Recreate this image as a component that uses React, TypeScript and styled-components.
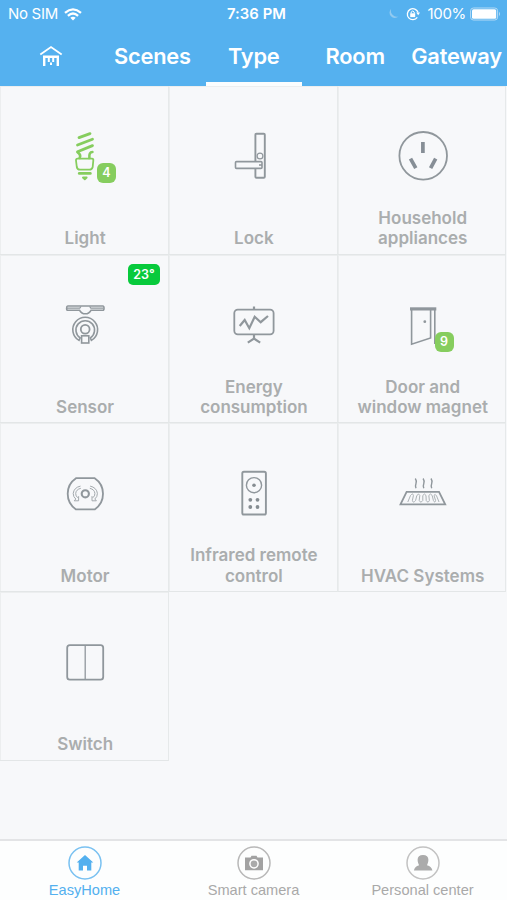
import React from "react";
import styled, { createGlobalStyle } from "styled-components";

const GlobalStyle = createGlobalStyle`
  *, *::before, *::after { box-sizing: border-box; }
  body { margin: 0; background: #f7f8fa; }
`;

const Screen = styled.div`
  display: flex;
  flex-direction: column;
  width: 507px;
  height: 900px;
  overflow: hidden;
  background: #f7f8fa;
  font-family: Inter, "Liberation Sans", sans-serif;
`;

const Header = styled.header`
  display: flex;
  flex-direction: column;
  height: 86px;
  flex: none;
  background: #55b1ef;
  color: #fff;
`;

const StatusBar = styled.div`
  display: grid;
  grid-template-columns: 1fr auto 1fr;
  align-items: center;
  height: 28px;
  padding: 0 6px 0 8px;
  font-size: 15px;
  line-height: 28px;
  white-space: nowrap;
`;

const StatusGroup = styled.div<{ $end?: boolean }>`
  display: flex;
  align-items: center;
  justify-content: ${(p) => (p.$end ? "flex-end" : "flex-start")};
  gap: ${(p) => (p.$end ? "7px" : "6px")};
  letter-spacing: -0.3px;
`;

const StatusBattery = styled.span`
  display: flex;
  align-items: center;
  gap: 4px;
`;

const Clock = styled.div`
  padding-left: 4px;
  font-weight: 600;
  font-size: 14.8px;
  letter-spacing: 0.1px;
`;

const TopTabs = styled.nav`
  display: grid;
  grid-template-columns: repeat(5, 1fr);
  flex: 1;
`;

const TopTab = styled.div<{ $active?: boolean }>`
  display: flex;
  align-items: center;
  justify-content: center;
  height: 58px;
  margin: 0 2.2px 0 2.8px;
  padding-top: 2px;
  border-bottom: 4px solid ${(p) => (p.$active ? "#fbfdfe" : "transparent")};
  font-size: 21.8px;
  font-weight: 600;
  letter-spacing: -0.2px;
  white-space: nowrap;
`;

const Content = styled.main`
  flex: 1;
`;

const Grid = styled.div`
  display: grid;
  grid-template-columns: repeat(3, 168.8px);
  grid-auto-rows: 168.67px;
`;

const Cell = styled.section`
  position: relative;
  display: flex;
  flex-direction: column;
  align-items: center;
  justify-content: space-between;
  padding: 40px 0 4.7px 2.4px;
  border-right: 1px solid #e6e9ea;
  border-bottom: 1px solid #e3e6e7;
  box-shadow: inset 1px 1px 0 #eceeef;
`;

const Label = styled.div`
  color: #aaadae;
  font-size: 17px;
  font-weight: 600;
  line-height: 20.5px;
  text-align: center;
  white-space: pre-line;
`;

const CountBadge = styled.span`
  position: absolute;
  left: 97px;
  top: 77px;
  width: 19px;
  height: 20px;
  border-radius: 6px;
  background: #86cd5e;
  color: #fff;
  font-size: 12.5px;
  font-weight: 600;
  line-height: 20px;
  text-align: center;
`;

const TempBadge = styled.span`
  position: absolute;
  left: 128px;
  top: 9px;
  width: 32px;
  height: 21px;
  border-radius: 5px;
  background: #08ca3c;
  color: #fff;
  font-size: 12.5px;
  font-weight: 600;
  line-height: 21px;
  text-align: center;
`;

const IconBox = styled.svg`
  display: block;
  width: 80px;
  height: 60px;
  flex: none;
  fill: none;
  stroke: #90979c;
  stroke-width: 1.6;
`;

const BottomBar = styled.footer`
  display: grid;
  grid-template-columns: repeat(3, 1fr);
  flex: none;
  height: 61px;
  padding-top: 5px;
  border-top: 2px solid #e3e4e6;
  background: #fdfefe;
`;

const BottomTab = styled.div<{ $active?: boolean }>`
  display: flex;
  flex-direction: column;
  align-items: center;
  color: ${(p) => (p.$active ? "#53b0ef" : "#a9a9a9")};
  font-family: "Liberation Sans", Arial, sans-serif;
  font-size: 14.6px;
  line-height: 20px;
`;

const Glyph = styled.svg`
  display: block;
  flex: none;
`;

const LightIcon = () => (
  <IconBox viewBox="0 0 80 60">
    <g stroke="#86cd5e" strokeLinecap="round" strokeLinejoin="round">
      <path strokeWidth="2.8" d="M34 11.6 45 7.6M32.5 19 47.5 13.2M32.5 25.8 47.5 19.6" />
      <path strokeWidth="2.6" d="M32.8 26.4Q36.4 29 34.6 32M47.4 26Q43.8 26 44.4 32" />
      <path strokeWidth="1.8" d="M32.5 32.7H47Q48.5 32.7 48.3 34.5L47.7 41Q47 43.7 44.5 43.7H35Q32.3 43.7 31.8 41L31 34.5Q31 32.7 32.5 32.7Z" />
      <path strokeWidth="2.6" d="M34.2 47.4H45.4" />
      <path fill="#86cd5e" strokeWidth="1.8" d="M37.9 51.5H41.7L39.8 53.3Z" />
    </g>
  </IconBox>
);

const LockIcon = () => (
  <IconBox viewBox="0 0 80 60">
    <rect x="41.4" y="7.8" width="9.4" height="44" rx="1" strokeWidth="1.9" />
    <circle cx="46" cy="30" r="2.9" strokeWidth="1.2" />
    <rect x="21.5" y="35.6" width="26.5" height="6.8" rx="1" fill="#f7f8fa" />
    <path d="M45 39H48" />
  </IconBox>
);

const SocketIcon = () => (
  <IconBox viewBox="0 0 80 60">
    <circle cx="40.2" cy="29.8" r="23.8" strokeWidth="1.8" />
    <path strokeWidth="3.7" stroke="#868e96" d="M39.9 16V27M27.5 32.7 32.8 42.2M52.7 32.7 47.6 42.2" />
  </IconBox>
);

const SensorIcon = () => (
  <IconBox viewBox="0 0 80 60">
    <path d="M22.8 11H57.8Q59 11 59 13.2T57.8 15.3H46Q44 18.8 40.3 18.8T34.6 15.3H22.8Q21.6 15.3 21.6 13.2T22.8 11Z" />
    <path strokeWidth="1.2" d="M22 13.2H34.8L36 11.5M44.6 11.5 45.8 13.2H58.5" />
    <path strokeWidth="1.6" d="M34 45.4A12.4 12.4 0 1 1 46.4 45.4L45.3 42.8A9.3 9.3 0 1 0 35.2 42.8Z" />
    <circle cx="40.2" cy="34.3" r="4.4" strokeWidth="1.8" />
    <rect x="36.6" y="40.8" width="7.2" height="7.2" fill="#f7f8fa" />
  </IconBox>
);

const EnergyIcon = () => (
  <IconBox viewBox="0 0 80 60">
    <rect x="20.3" y="14.6" width="39.3" height="24.7" rx="3.5" strokeWidth="1.8" />
    <path strokeWidth="2.2" d="M40 11.5V14.5M40 39.5V44M33.8 47.6 40 43.6 46.2 47.6" />
    <path strokeWidth="2.2" d="M25.7 31 30.7 25 35.3 33.2 40.7 21.7 46.7 27.2 54 21" />
  </IconBox>
);

const DoorIcon = () => (
  <IconBox viewBox="0 0 80 60">
    <path strokeWidth="3.2" d="M27 13.9H53.3" />
    <path d="M28.6 14V49.2L47.6 42.9V15M51.8 15V49" />
    <circle cx="41.8" cy="26.7" r="1.4" fill="#90979c" stroke="none" />
  </IconBox>
);

const MotorIcon = () => (
  <IconBox viewBox="0 2 80 60">
    <path strokeWidth="1.8" d="M31 17.2H49.7A18.8 18.8 0 0 1 49.7 48.4H31A18.8 18.8 0 0 1 31 17.2Z" />
    <circle cx="40.3" cy="32.8" r="3.6" strokeWidth="2.1" />
    <g strokeWidth="1" stroke="#a3a9ad">
      <path d="M35.5 25.1Q29 26.5 28.2 32.4 28.2 36 30.8 38M35.8 27.3Q31 28.5 30.7 32.5 30.7 35.2 32.6 36.5L33.6 35.5V39.8H29.2L30.8 38" />
      <path d="M45.1 25.1Q51.6 26.5 52.4 32.4 52.4 36 49.8 38M44.8 27.3Q49.6 28.5 49.9 32.5 49.9 35.2 48 36.5L47 35.5V39.8H51.4L49.8 38" />
    </g>
  </IconBox>
);

const RemoteIcon = () => (
  <IconBox viewBox="0 2 80 60">
    <rect x="28.3" y="10.8" width="23.6" height="42.7" rx="1.6" strokeWidth="1.9" />
    <circle cx="40" cy="24.2" r="7.6" strokeWidth="1.4" />
    <g fill="#858c91" stroke="none">
      <circle cx="40" cy="24.2" r="1.8" />
      <circle cx="36.3" cy="38.8" r="1.9" />
      <circle cx="43.5" cy="38.8" r="1.9" />
      <circle cx="36.3" cy="46" r="1.9" />
      <circle cx="43.5" cy="46" r="1.9" />
    </g>
  </IconBox>
);

const HvacIcon = () => (
  <IconBox viewBox="0 2 80 60">
    <path strokeWidth="1.8" d="M23.6 30.9H56L62.2 43.4H17.5Z" />
    <path strokeWidth="1.4" d="M32.3 17.5Q34 20 33 22.5T33 27.3M40.1 17.5Q41.8 20 40.8 22.5T40.8 27.3M48 17.5Q49.7 20 48.7 22.5T48.7 27.3" />
    <path strokeWidth="0.9" stroke="#a3a9ad" d="M24.8 41 27.5 34.5Q30 31.5 30.4 34.5L29.4 39.5Q30 42.6 32.6 39.5L33.8 34.5Q35.8 31.5 36.8 34.5L36.2 39.5Q37.6 42.6 39.8 39.5V34.5Q41.4 31.5 43 34.5L43.2 39.5Q45 42.6 46.4 39.5L45.8 34.5Q47.4 31.5 49.2 34.5L50.4 39.5Q52 42.6 52.6 39.5L51 34.5Q52 32 53.6 35L56 41" />
  </IconBox>
);

const SwitchIcon = () => (
  <IconBox viewBox="0 0 80 60">
    <rect x="22.2" y="13.1" width="36" height="34.6" rx="2.6" strokeWidth="1.8" />
    <path strokeWidth="1.3" d="M40.2 13V48" />
  </IconBox>
);

const WifiIcon = () => (
  <Glyph width="18" height="13" viewBox="0 0 18 13" fill="none" stroke="#fff" strokeWidth="2.3">
    <path d="M1 4.8Q9-2 17 4.8M3.9 7.8Q9 3.3 14.1 7.8" />
    <path d="M6.3 9.8Q9 7.6 11.7 9.8L9 12.5Z" fill="#fff" stroke="none" />
  </Glyph>
);

const MoonIcon = () => (
  <Glyph width="11" height="12" viewBox="0 0 11 12">
    <path d="M3.2.8A5.3 5.3 0 1 0 10.5 8.5 6 6 0 0 1 3.2.8Z" fill="#91caf0" />
  </Glyph>
);

const RotationLockIcon = () => (
  <Glyph width="14" height="14" viewBox="0 0 14 14" fill="none" stroke="#fff" strokeWidth="1.3">
    <path d="M11.3 10.4A5.5 5.5 0 1 1 12.1 5.5" />
    <path d="M10.2 5.5H14L12.2 8.2Z" fill="#fff" stroke="none" />
    <rect x="4.2" y="6.3" width="5" height="3.8" fill="#fff" stroke="none" />
    <path d="M5.2 6.5V5Q6.7 3 8.2 5V6.5" strokeWidth="1" />
  </Glyph>
);

const BatteryIcon = () => (
  <Glyph width="31" height="14" viewBox="0 0 31 14">
    <rect x=".6" y="1" width="27" height="12" rx="2.8" fill="none" stroke="#b4daf5" />
    <rect x="2" y="2.2" width="24.2" height="9.6" rx="1.5" fill="#fff" />
    <path d="M29 4.8Q31 7 29 9.2Z" fill="#b4daf5" />
  </Glyph>
);

const HomeIcon = () => (
  <Glyph width="24" height="22" viewBox="0 0 24 22" fill="none" stroke="#fff">
    <path strokeWidth="1.8" d="M1.3 9.5 12 2 22.7 9.5" />
    <path strokeWidth="2.4" d="M5.2 21V11.8H18.8V21" />
    <path strokeWidth="2" d="M9.8 12V17M14.2 12V17M12 17.6V20" />
  </Glyph>
);

const TabHouse = () => (
  <Glyph width="34" height="34" viewBox="0 0 34 34">
    <circle cx="17" cy="17" r="16" fill="none" stroke="#79c1f1" strokeWidth="1.5" />
    <path fill="#53b0ef" d="M17 9 25.3 16.5H23.3V24.5H19V19.7H15V24.5H10.7V16.5H8.7Z" />
  </Glyph>
);

const TabCamera = () => (
  <Glyph width="34" height="34" viewBox="0 0 34 34">
    <circle cx="17" cy="17" r="16" fill="none" stroke="#b8b8b8" strokeWidth="1.5" />
    <path fill="#a2a2a2" d="M8 11.5H13.5L14.5 9.8H19.5L20.5 11.5H26V24.3H8Z" />
    <circle cx="17" cy="17.8" r="4.1" fill="#aaa" stroke="#fff" strokeWidth="1.5" />
  </Glyph>
);

const TabPerson = () => (
  <Glyph width="34" height="34" viewBox="0 0 34 34">
    <circle cx="17" cy="17" r="16" fill="none" stroke="#c2c2c2" strokeWidth="1.5" />
    <path fill="#ababab" d="M17 9C20.5 9 22.4 11 22.4 13.8C22.4 16.5 21.4 18 21 19.2Q25.8 20.6 26.4 24.5H7.9Q8.5 20.6 13.1 19.2C12.6 18 11.6 16.5 11.6 13.8C11.6 11 13.5 9 17 9Z" />
  </Glyph>
);

type Device = { label: string; Icon: React.FC; count?: number; temp?: string };

const devices: Device[] = [
  { label: "Light", Icon: LightIcon, count: 4 },
  { label: "Lock", Icon: LockIcon },
  { label: "Household\nappliances", Icon: SocketIcon },
  { label: "Sensor", Icon: SensorIcon, temp: "23°" },
  { label: "Energy\nconsumption", Icon: EnergyIcon },
  { label: "Door and\nwindow magnet", Icon: DoorIcon, count: 9 },
  { label: "Motor", Icon: MotorIcon },
  { label: "Infrared remote\ncontrol", Icon: RemoteIcon },
  { label: "HVAC Systems", Icon: HvacIcon },
  { label: "Switch", Icon: SwitchIcon },
];

export default function App() {
  return (
    <Screen>
      <GlobalStyle />
      <Header>
        <StatusBar>
          <StatusGroup>
            No SIM
            <WifiIcon />
          </StatusGroup>
          <Clock>7:36 PM</Clock>
          <StatusGroup $end>
            <MoonIcon />
            <RotationLockIcon />
            <StatusBattery>
              100%
              <BatteryIcon />
            </StatusBattery>
          </StatusGroup>
        </StatusBar>
        <TopTabs>
          <TopTab><HomeIcon /></TopTab>
          <TopTab>Scenes</TopTab>
          <TopTab $active>Type</TopTab>
          <TopTab>Room</TopTab>
          <TopTab>Gateway</TopTab>
        </TopTabs>
      </Header>
      <Content>
        <Grid>
          {devices.map(({ label, Icon, count, temp }) => (
            <Cell key={label}>
              <Icon />
              <Label>{label}</Label>
              {count !== undefined && <CountBadge>{count}</CountBadge>}
              {temp && <TempBadge>{temp}</TempBadge>}
            </Cell>
          ))}
        </Grid>
      </Content>
      <BottomBar>
        <BottomTab $active><TabHouse />EasyHome</BottomTab>
        <BottomTab><TabCamera />Smart camera</BottomTab>
        <BottomTab><TabPerson />Personal center</BottomTab>
      </BottomBar>
    </Screen>
  );
}
